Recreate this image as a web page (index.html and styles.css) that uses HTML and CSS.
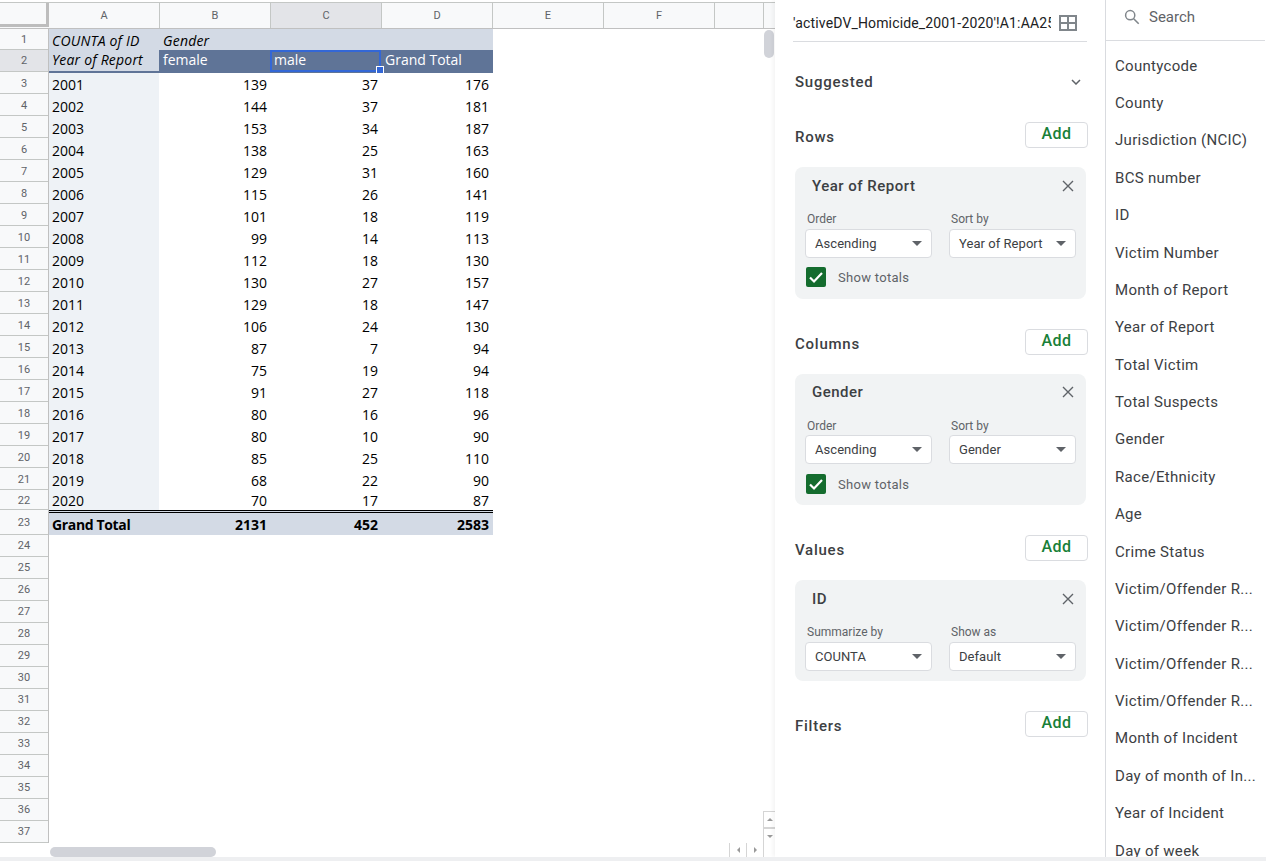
FILE: index.html
```html
<!DOCTYPE html>
<html lang="en">
<head>
<meta charset="utf-8">
<title>Pivot table</title>
<link rel="stylesheet" href="styles.css">
</head>
<body>
<div class="app">
  <main class="sheet">
    <div class="col-head">
      <div class="corner"></div>
      <div class="ch">A</div><div class="ch">B</div><div class="ch ch-on">C</div><div class="ch">D</div><div class="ch">E</div><div class="ch">F</div><div class="ch ch-g"></div>
    </div>
    <div class="sheet-body">
      <div class="row-head">
        <div class="rh r21">1</div><div class="rh rh-on">2</div><div class="rh">3</div><div class="rh">4</div><div class="rh">5</div><div class="rh">6</div><div class="rh">7</div><div class="rh">8</div><div class="rh">9</div><div class="rh">10</div><div class="rh">11</div><div class="rh">12</div><div class="rh">13</div><div class="rh">14</div><div class="rh">15</div><div class="rh">16</div><div class="rh">17</div><div class="rh">18</div><div class="rh">19</div><div class="rh">20</div><div class="rh">21</div><div class="rh r20">22</div><div class="rh r25">23</div><div class="rh">24</div><div class="rh">25</div><div class="rh">26</div><div class="rh">27</div><div class="rh">28</div><div class="rh">29</div><div class="rh">30</div><div class="rh">31</div><div class="rh">32</div><div class="rh">33</div><div class="rh">34</div><div class="rh">35</div><div class="rh">36</div><div class="rh">37</div>
      </div>
      <div class="pivot">
        <div class="c t1 it">COUNTA of ID</div><div class="c t1 it">Gender</div><div class="c t1"></div><div class="c t1"></div>
        <div class="c t2a it">Year of Report</div><div class="c t2">female</div><div class="c t2 sel">male<span class="handle"></span></div><div class="c t2">Grand Total</div>
        <div class="c a">2001</div><div class="c n">139</div><div class="c n">37</div><div class="c n">176</div>
        <div class="c a">2002</div><div class="c n">144</div><div class="c n">37</div><div class="c n">181</div>
        <div class="c a">2003</div><div class="c n">153</div><div class="c n">34</div><div class="c n">187</div>
        <div class="c a">2004</div><div class="c n">138</div><div class="c n">25</div><div class="c n">163</div>
        <div class="c a">2005</div><div class="c n">129</div><div class="c n">31</div><div class="c n">160</div>
        <div class="c a">2006</div><div class="c n">115</div><div class="c n">26</div><div class="c n">141</div>
        <div class="c a">2007</div><div class="c n">101</div><div class="c n">18</div><div class="c n">119</div>
        <div class="c a">2008</div><div class="c n">99</div><div class="c n">14</div><div class="c n">113</div>
        <div class="c a">2009</div><div class="c n">112</div><div class="c n">18</div><div class="c n">130</div>
        <div class="c a">2010</div><div class="c n">130</div><div class="c n">27</div><div class="c n">157</div>
        <div class="c a">2011</div><div class="c n">129</div><div class="c n">18</div><div class="c n">147</div>
        <div class="c a">2012</div><div class="c n">106</div><div class="c n">24</div><div class="c n">130</div>
        <div class="c a">2013</div><div class="c n">87</div><div class="c n">7</div><div class="c n">94</div>
        <div class="c a">2014</div><div class="c n">75</div><div class="c n">19</div><div class="c n">94</div>
        <div class="c a">2015</div><div class="c n">91</div><div class="c n">27</div><div class="c n">118</div>
        <div class="c a">2016</div><div class="c n">80</div><div class="c n">16</div><div class="c n">96</div>
        <div class="c a">2017</div><div class="c n">80</div><div class="c n">10</div><div class="c n">90</div>
        <div class="c a">2018</div><div class="c n">85</div><div class="c n">25</div><div class="c n">110</div>
        <div class="c a">2019</div><div class="c n">68</div><div class="c n">22</div><div class="c n">90</div>
        <div class="c a r20c">2020</div><div class="c n r20c">70</div><div class="c n r20c">17</div><div class="c n r20c">87</div>
        <div class="c g ga">Grand Total</div><div class="c g gn">2131</div><div class="c g gn">452</div><div class="c g gn">2583</div>
      </div>
      <div class="vthumb"></div>
      <div class="vbtn vup"><span class="tri-up"></span></div>
      <div class="vbtn vdown"><span class="tri-down"></span></div>
    </div>
    <div class="hbar">
      <div class="hthumb"></div>
      <div class="hbtns">
        <div class="hbtn"><span class="tri-left"></span></div>
        <div class="hbtn"><span class="tri-right"></span></div>
        <div class="hbtn hcorner"></div>
      </div>
    </div>
  </main>

  <aside class="editor">
    <div class="source">
      <span class="source-text">'activeDV_Homicide_2001-2020'!A1:AA2583</span>
      <svg class="grid-ico" width="18" height="16" viewBox="0 0 18 16"><path d="M1 1h16v14H1zM9 1v14M1 8h16" fill="none" stroke="#80868b" stroke-width="2"/></svg>
    </div>
    <div class="suggested">
      <span class="sec-label">Suggested</span>
      <svg width="10" height="6" viewBox="0 0 10 6"><path d="M1 1l4 4 4-4" fill="none" stroke="#5f6368" stroke-width="1.5"/></svg>
    </div>

    <div class="sec-head"><span class="sec-label">Rows</span><span class="add">Add</span></div>
    <section class="card">
      <div class="card-title"><span>Year of Report</span><svg class="x" width="12" height="12" viewBox="0 0 12 12"><path d="M1 1l10 10M11 1L1 11" stroke="#5f6368" stroke-width="1.4"/></svg></div>
      <div class="fields">
        <div class="field"><div class="flabel">Order</div><div class="select"><span>Ascending</span><i class="caret"></i></div></div>
        <div class="field"><div class="flabel">Sort by</div><div class="select"><span>Year of Report</span><i class="caret"></i></div></div>
      </div>
      <div class="totals"><span class="check"><svg width="20" height="20" viewBox="0 0 20 20"><path d="M4 10.5l4 4 8-8.5" fill="none" stroke="#fff" stroke-width="2.2"/></svg></span><span>Show totals</span></div>
    </section>

    <div class="sec-head"><span class="sec-label">Columns</span><span class="add">Add</span></div>
    <section class="card card-c">
      <div class="card-title"><span>Gender</span><svg class="x" width="12" height="12" viewBox="0 0 12 12"><path d="M1 1l10 10M11 1L1 11" stroke="#5f6368" stroke-width="1.4"/></svg></div>
      <div class="fields">
        <div class="field"><div class="flabel">Order</div><div class="select"><span>Ascending</span><i class="caret"></i></div></div>
        <div class="field"><div class="flabel">Sort by</div><div class="select"><span>Gender</span><i class="caret"></i></div></div>
      </div>
      <div class="totals"><span class="check"><svg width="20" height="20" viewBox="0 0 20 20"><path d="M4 10.5l4 4 8-8.5" fill="none" stroke="#fff" stroke-width="2.2"/></svg></span><span>Show totals</span></div>
    </section>

    <div class="sec-head"><span class="sec-label">Values</span><span class="add">Add</span></div>
    <section class="card card-v">
      <div class="card-title"><span>ID</span><svg class="x" width="12" height="12" viewBox="0 0 12 12"><path d="M1 1l10 10M11 1L1 11" stroke="#5f6368" stroke-width="1.4"/></svg></div>
      <div class="fields">
        <div class="field"><div class="flabel">Summarize by</div><div class="select"><span>COUNTA</span><i class="caret"></i></div></div>
        <div class="field"><div class="flabel">Show as</div><div class="select"><span>Default</span><i class="caret"></i></div></div>
      </div>
    </section>

    <div class="sec-head"><span class="sec-label">Filters</span><span class="add">Add</span></div>
  </aside>

  <aside class="fieldlist">
    <div class="search">
      <svg width="16" height="16" viewBox="0 0 16 16"><circle cx="6.2" cy="6.2" r="4.6" fill="none" stroke="#80868b" stroke-width="1.5"/><path d="M9.7 9.7l5 5" stroke="#80868b" stroke-width="1.6"/></svg>
      <span>Search</span>
    </div>
    <ul class="items">
      <li>Countycode</li><li>County</li><li>Jurisdiction (NCIC)</li><li>BCS number</li><li>ID</li><li>Victim Number</li><li>Month of Report</li><li>Year of Report</li><li>Total Victim</li><li>Total Suspects</li><li>Gender</li><li>Race/Ethnicity</li><li>Age</li><li>Crime Status</li><li>Victim/Offender R...</li><li>Victim/Offender R...</li><li>Victim/Offender R...</li><li>Victim/Offender R...</li><li>Month of Incident</li><li>Day of month of In...</li><li>Year of Incident</li><li>Day of week</li>
    </ul>
  </aside>
</div>
<div class="strip"></div>
</body>
</html>
```
FILE: styles.css
```css
* { box-sizing: border-box; }
html, body { margin: 0; padding: 0; height: 861px; overflow: hidden; background: #fff; }
body { font-family: Roboto, "Liberation Sans", sans-serif; color: #202124; }
.app { display: flex; height: 857px; overflow: hidden; }
.strip { height: 4px; background: #eeeff1; }

/* sheet */
.sheet { width: 775px; flex: none; display: flex; flex-direction: column; padding-top: 2px; }
.col-head { display: flex; height: 27px; border-top: 1px solid #c4c7c5; background: #f8f9fa; border-bottom: 1px solid #c0c0c0; flex: none; }
.corner { width: 49px; border-right: 3px solid #bdbdbd; border-bottom: 3px solid #bdbdbd; height: 24px; }
.ch { width: 111px; border-right: 1px solid #c4c7c5; font-size: 11px; color: #5f6368; text-align: center; line-height: 26px; }
.ch-on { background: #e3e4e8; }
.ch-g { width: 49px; }
.sheet-body { position: relative; display: flex; flex: none; height: 814px; }
.row-head { width: 49px; flex: none; border-right: 1px solid #c0c0c0; background: #f8f9fa; }
.rh { height: 22px; border-bottom: 1px solid #c4c7c5; font-size: 11px; color: #5f6368; text-align: center; line-height: 24px; }
.rh:nth-child(-n+2), .rh:nth-child(n+24) { line-height: 22px; }
.rh-on { background: #e3e4e8; }
.rh.r21 { height: 21px; }
.rh.r20 { height: 20px; line-height: 22px; }
.rh.r25 { height: 25px; line-height: 26px; }
.pivot { display: grid; grid-template-columns: 110px 111px 111px 112px; grid-template-rows: 21px repeat(20, 22px) 20px 25px; align-self: flex-start; font-family: "Open Sans", "Noto Sans", sans-serif; font-size: 14px; color: #000; }
.c { padding: 0 3px 0 4px; white-space: nowrap; overflow: hidden; background: #fff; }
.c:nth-child(4n+1) { padding-left: 3px; }
.c:nth-child(4n) { padding-right: 4px; }
.t1 { background: #d3dae5; line-height: 24px; }
.it { font-style: italic; letter-spacing: .2px; }
.t2a { position: relative; z-index: 1; height: 23px; background: #d3dae5; border-bottom: 2px solid #5f7497; line-height: 20px; }
.t2 { position: relative; height: 23px; background: #5f7497; color: #fff; line-height: 20px; }
.a { background: #eef2f6; line-height: 26px; }
.n { text-align: right; line-height: 26px; }
.r20c { line-height: 21px; }
.g { background: #d3dae5; font-weight: 700; border-top: 3px double #000; line-height: 23px; }
.ga { letter-spacing: -.35px; }
.gn { text-align: right; }
.sel { z-index: 1; overflow: visible; height: 22px; border: 2px solid #3367d6; padding: 0 2px; line-height: 16px; box-shadow: 0 1px 0 #5f7497; }
.handle { position: absolute; right: -5px; bottom: -4px; width: 8px; height: 8px; background: #3367d6; border: 1px solid #fff; }
.vthumb { position: absolute; left: 764px; top: 1px; width: 10px; height: 28px; background: #d1d3d9; border-radius: 5px; }
.vbtn { position: absolute; left: 763px; width: 12px; height: 17px; border: 1px solid #d5d5d5; border-right: 0; display: flex; align-items: center; justify-content: center; background: #fff; }
.vup { top: 782px; }
.vdown { top: 799px; }
.tri-up, .tri-down, .tri-left, .tri-right { width: 0; height: 0; display: block; border: 3px solid transparent; }
.tri-up { border-bottom-color: #9a9a9a; border-top: 0; }
.tri-down { border-top-color: #9a9a9a; border-bottom: 0; }
.tri-left { border-right-color: #9a9a9a; border-left: 0; }
.tri-right { border-left-color: #9a9a9a; border-right: 0; }
.hbar { position: relative; flex: 1; display: flex; background: #fff; }
.hthumb { position: absolute; left: 50px; top: 4px; width: 166px; height: 10px; background: #d1d3d9; border-radius: 5px; }
.hbtns { margin-left: auto; display: flex; }
.hbtn { width: 17px; height: 14px; border-left: 1px solid #d5d5d5; display: flex; align-items: center; justify-content: center; }
.hcorner { width: 12px; }

/* editor */
.editor { width: 330px; flex: none; background: #fff; padding: 0 18px; box-shadow: -2px 0 4px rgba(0,0,0,.05); position: relative; }
.source { height: 42px; border-bottom: 1px solid #dadce0; display: flex; align-items: center; justify-content: space-between; font-size: 14px; letter-spacing: .15px; color: #202124; padding-top: 5px; padding-right: 10px; }
.source-text { width: 258px; overflow: hidden; white-space: nowrap; display: block; }
.grid-ico { flex: none; }
.suggested { height: 26px; margin-top: 27px; padding-right: 6px; display: flex; align-items: center; justify-content: space-between; }
.sec-label { font-size: 15px; font-weight: 500; color: #3c4043; padding-left: 2px; letter-spacing: .75px; }
.sec-head { height: 26px; margin-top: 27px; margin-right: -1px; display: flex; justify-content: space-between; align-items: flex-start; margin-bottom: 19px; }
.sec-head .sec-label { line-height: 30px; }
.card + .sec-head { margin-top: 30px; }
.add { width: 63px; height: 26px; border: 1px solid #dadce0; border-radius: 4px; color: #188038; font-size: 16px; letter-spacing: .4px; font-weight: 500; text-align: center; line-height: 22px; }
.card { margin-left: 2px; width: 291px; height: 132px; background: #f1f3f4; border-radius: 8px; padding: 0 10px; }
.card-c { height: 131px; }
.card-v { height: 101px; }
.card-title { height: 38px; display: flex; align-items: center; justify-content: space-between; font-size: 15px; letter-spacing: .5px; font-weight: 500; color: #3c4043; padding: 0 2px 0 7px; }
.card-c .card-title { height: 36px; }
.fields { display: flex; gap: 17px; margin-top: 6px; }
.card-c .fields { margin-top: 7px; }
.field { width: 127px; }
.flabel { font-size: 12px; color: #5f6368; padding-left: 2px; line-height: 16px; height: 18px; }
.card-c .flabel { line-height: 18px; }
.select { height: 29px; background: #fff; border: 1px solid #dadce0; border-radius: 4px; font-size: 13px; letter-spacing: .05px; color: #3c4043; display: flex; align-items: center; justify-content: space-between; padding: 0 9px; }
.caret { width: 0; height: 0; border: 5px solid transparent; border-top-color: #5f6368; border-bottom: 0; }
.totals { display: flex; align-items: center; gap: 12px; margin-top: 9px; margin-left: 1px; font-size: 13px; letter-spacing: .3px; color: #5f6368; }
.card-c .totals { margin-top: 10px; }
.check { width: 20px; height: 20px; background: #146c2e; border-radius: 2px; display: block; }
.check svg { display: block; }

/* list */
.fieldlist { width: 161px; flex: none; border-left: 1px solid #dadce0; overflow: hidden; }
.search { height: 41px; margin-right: 1px; border-bottom: 1px solid #dadce0; display: flex; align-items: center; gap: 9px; padding-left: 18px; padding-bottom: 6px; font-size: 15px; color: #5f6368; }
.items { list-style: none; margin: 0; padding: 6.7px 0 0 9px; }
.items li { height: 37.38px; line-height: 37px; font-size: 15px; letter-spacing: .3px; color: #3c4043; white-space: nowrap; }
```
